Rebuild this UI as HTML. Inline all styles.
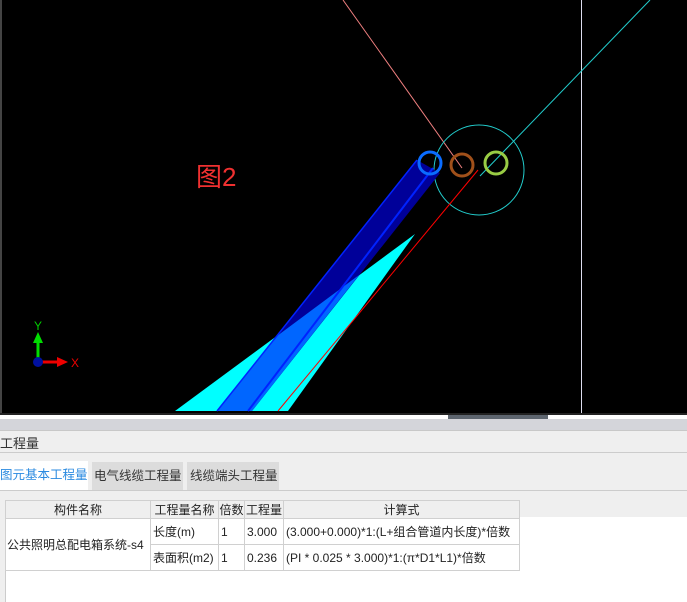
<!DOCTYPE html>
<html><head><meta charset="utf-8"><style>
body{margin:0;width:687px;height:602px;overflow:hidden;background:#efefef;font-family:"Liberation Sans","Noto Sans CJK SC",sans-serif;position:relative}
.a{position:absolute}
.cad{left:0;top:0;width:687px;height:413px;background:#000}
table{table-layout:fixed}
td{border:1px solid #d0d0d0;padding:0 2px;font-size:12px;color:#222;height:25px;white-space:nowrap;overflow:hidden}
th{border:1px solid #d0d0d0;font-weight:normal;font-size:12px;color:#222;height:16px;background:#efefef;padding:0;white-space:nowrap;overflow:hidden}
.tab{white-space:nowrap;font-size:12.5px;overflow:hidden}
</style></head><body>
<div class="a cad"></div>
<svg class="a" style="left:0;top:0" width="687" height="413">
<line x1="1" y1="0" x2="1" y2="413" stroke="#888" stroke-width="1"/>
<line x1="581.5" y1="0" x2="581.5" y2="413" stroke="#dde" stroke-width="1"/>
<line x1="343" y1="0" x2="462" y2="168" stroke="#f08080" stroke-width="1"/>
<line x1="650" y1="0" x2="480" y2="176" stroke="#2cc" stroke-width="1"/>
<circle cx="479" cy="170" r="45" fill="none" stroke="#2cc" stroke-width="1"/>
<polygon points="175,411 415,234 288,411" fill="#00ffff"/>
<polygon points="417,160 440,173 252,411 217,411" fill="#000099"/>
<polygon points="277,336 359,275 252,411 217,411" fill="#0066ff"/>
<line x1="433" y1="168" x2="248" y2="411" stroke="#0022ff" stroke-width="2"/>
<line x1="417" y1="160" x2="217" y2="411" stroke="#0022ff" stroke-width="1.5"/>
<line x1="478" y1="170" x2="278" y2="411" stroke="#f00" stroke-width="1"/>
<circle cx="430" cy="163" r="11" fill="none" stroke="#0a6cff" stroke-width="3"/>
<circle cx="462" cy="165" r="11" fill="none" stroke="#a0501a" stroke-width="3"/>
<circle cx="496" cy="163" r="11" fill="none" stroke="#9c4" stroke-width="3"/>
<text x="196" y="186" fill="#f03030" font-size="26" font-family="Liberation Sans,Noto Sans CJK SC,sans-serif">图2</text>
<line x1="38" y1="362" x2="38" y2="340" stroke="#0d0" stroke-width="3"/>
<polygon points="33,343 43,343 38,332" fill="#0d0"/>
<line x1="38" y1="362" x2="60" y2="362" stroke="#e00" stroke-width="3"/>
<polygon points="57,357 57,367 68,362" fill="#e00"/>
<circle cx="38" cy="362" r="5" fill="#0010a0"/>
<text x="34" y="330" fill="#0c0" font-size="12">Y</text>
<text x="71" y="367" fill="#e00" font-size="12">X</text>
</svg>
<div class="a" style="left:0;top:413px;width:687px;height:2px;background:#222"></div>
<div class="a" style="left:0;top:415px;width:687px;height:4px;background:#fff"></div>
<div class="a" style="left:448px;top:415px;width:100px;height:4px;background:#5e6670"></div>
<div class="a" style="left:0;top:419px;width:687px;height:11px;background:#d4d5da"></div>
<div class="a" style="left:0;top:430px;width:687px;height:1px;background:#c8c8c8"></div>
<div class="a" style="left:0;top:433px;font-size:13px;color:#333">工程量</div>
<div class="a" style="left:0;top:452px;width:687px;height:1px;background:#ccc"></div>
<div class="a tab" style="left:0;top:461px;width:88px;height:30px;background:#fff;color:#2a8ae0;line-height:29px">图元基本工程量</div>
<div class="a tab" style="left:92px;top:462px;width:91px;height:28px;background:#dcdcdc;color:#333;line-height:28px;padding-left:2px;box-sizing:border-box">电气线缆工程量</div>
<div class="a tab" style="left:187px;top:462px;width:92px;height:28px;background:#dcdcdc;color:#333;line-height:28px;padding-left:3px;box-sizing:border-box">线缆端头工程量</div>
<div class="a" style="left:0;top:490px;width:687px;height:1px;background:#ccc"></div>
<div class="a" style="left:5px;top:500px;width:682px;height:102px;background:#fff;border-left:1px solid #ccc"></div>
<div class="a" style="left:519px;top:500px;width:168px;height:17px;background:#efefef"></div>
<table class="a" style="left:5px;top:500px;width:514px;border-collapse:collapse;background:#fff">
<colgroup><col style="width:145px"><col style="width:68px"><col style="width:26px"><col style="width:39px"><col style="width:236px"></colgroup>
<tr><th>构件名称</th><th>工程量名称</th><th>倍数</th><th>工程量</th><th>计算式</th></tr>
<tr><td rowspan="2" style="padding:0 1px">公共照明总配电箱系统-s4</td><td>长度(m)</td><td>1</td><td>3.000</td><td>(3.000+0.000)*1:(L+组合管道内长度)*倍数</td></tr>
<tr><td>表面积(m2)</td><td>1</td><td>0.236</td><td>(PI * 0.025 * 3.000)*1:(π*D1*L1)*倍数</td></tr>
</table>
</body></html>
